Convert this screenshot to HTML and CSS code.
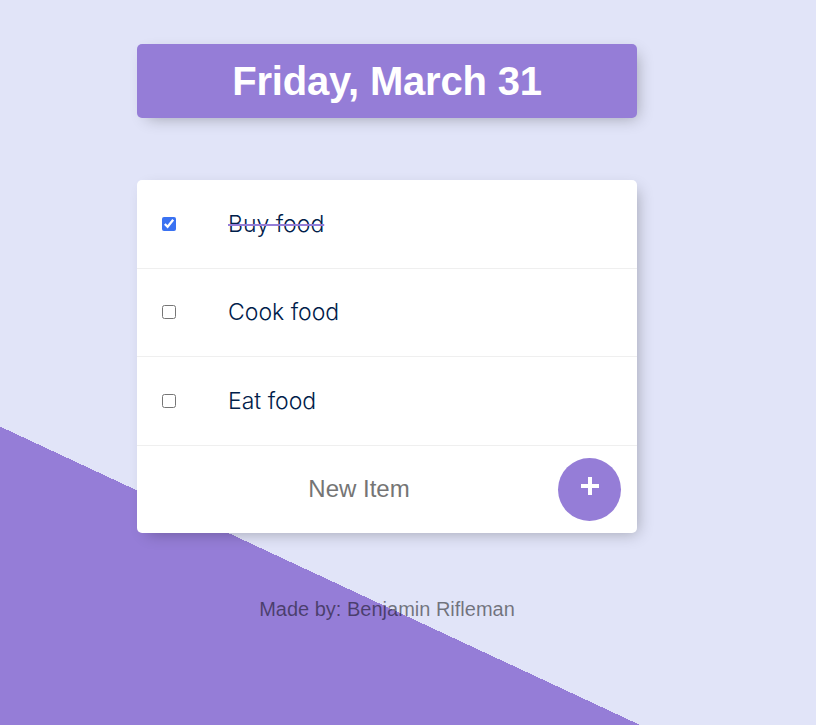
FILE: index.html
```html
<!DOCTYPE html>
<html lang="en">
<head>
<meta charset="utf-8">
<title>To-Do List</title>
<link rel="stylesheet" href="styles.css">
</head>
<body>
<main class="page">
  <div class="heading">
    <h1 class="heading-title">Friday, March 31</h1>
  </div>
  <div class="list">
    <label class="item">
      <input class="check" type="checkbox" checked>
      <span class="item-text done">Buy food</span>
    </label>
    <label class="item">
      <input class="check" type="checkbox">
      <span class="item-text">Cook food</span>
    </label>
    <label class="item">
      <input class="check" type="checkbox">
      <span class="item-text">Eat food</span>
    </label>
    <form class="item new-item" onsubmit="return false">
      <input class="new-input" type="text" name="newItem" placeholder="New Item" autocomplete="off">
      <button class="add-btn" type="submit" aria-label="Add">
        <svg width="20" height="20" viewBox="0 0 20 20"><path d="M10 1v18M1 10h18" stroke="#fff" stroke-width="4" stroke-linecap="butt"/></svg>
      </button>
    </form>
  </div>
  <footer class="footer">Made by: Benjamin Rifleman</footer>
</main>
</body>
</html>
```
FILE: styles.css
```css
html {
  height: 100%;
  background-color: #e1e4f8;
  background-image: linear-gradient(25deg, #957dd7 27%, #e1e4f8 27%);
  background-repeat: no-repeat;
}

body {
  margin: 0;
  font-family: "Liberation Sans", Arial, sans-serif;
}

.page {
  width: 500px;
  margin-left: 137px;
  padding-top: 44px;
}

.heading {
  background-color: #957dd7;
  border-radius: 5px;
  height: 74px;
  display: flex;
  align-items: center;
  justify-content: center;
  box-shadow: 5px 5px 15px -5px rgba(0, 0, 0, 0.3);
}

.heading-title {
  margin: 0;
  color: #fff;
  font-size: 40px;
  font-weight: 700;
  letter-spacing: -0.2px;
  line-height: 1;
}

.list {
  margin-top: 62px;
  background: #fff;
  border-radius: 5px;
  box-shadow: 5px 5px 15px -5px rgba(0, 0, 0, 0.3);
}

.item {
  display: flex;
  align-items: center;
  height: 87.5px;
  border-bottom: 1px solid #efefef;
}

.item:last-child {
  border-bottom: 0;
}

.check {
  width: 14px;
  height: 14px;
  margin: 0 0 0 25px;
  accent-color: #3a72f2;
}

.item-text {
  margin-left: 52px;
  font-family: Inter, "Liberation Sans", sans-serif;
  font-weight: 300;
  font-size: 23px;
  color: #00204a;
}

.done {
  text-decoration: line-through;
  text-decoration-color: #957dd7;
  text-decoration-thickness: 1.5px;
}

.new-item {
  padding-left: 23px;
  padding-right: 16px;
}

.new-input {
  flex: 1;
  min-width: 0;
  border: none;
  background: transparent;
  text-align: center;
  font-family: "Liberation Sans", Arial, sans-serif;
  font-size: 24px;
  color: #333;
  height: 60px;
  padding: 0;
  outline: none;
}

.new-input::placeholder {
  color: #757575;
}

.add-btn {
  width: 63px;
  height: 63px;
  border: 0;
  border-radius: 50%;
  background-color: #957dd7;
  display: flex;
  align-items: center;
  justify-content: center;
  padding: 0 0 6px 0;
  cursor: pointer;
}

.footer {
  margin-top: 65px;
  text-align: center;
  font-size: 20px;
  color: rgba(0, 0, 0, 0.5);
}
```
